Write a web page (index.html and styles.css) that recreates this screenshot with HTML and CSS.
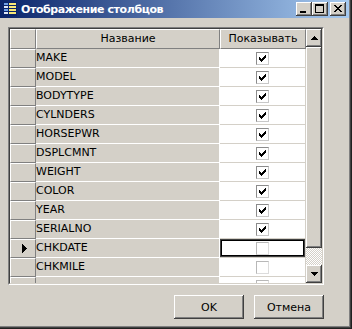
FILE: index.html
```html
<!DOCTYPE html>
<html lang="ru">
<head>
<meta charset="utf-8">
<title>Отображение столбцов</title>
<link rel="stylesheet" href="styles.css">
</head>
<body>
<div class="window">
  <div class="titlebar">
    <svg class="app-icon" width="16" height="16" viewBox="0 0 16 16" shape-rendering="crispEdges">
      <rect x="1" y="1" width="14" height="14" fill="#0a246a"/>
      <rect x="2" y="2" width="4" height="2" fill="#6fa0e8"/>
      <rect x="2" y="5" width="4" height="2" fill="#dfe8f8"/>
      <rect x="2" y="8" width="4" height="2" fill="#6fa0e8"/>
      <rect x="2" y="11" width="4" height="2" fill="#dfe8f8"/>
      <rect x="7" y="2" width="7" height="2" fill="#f8e878"/>
      <rect x="7" y="5" width="7" height="2" fill="#f8e878"/>
      <rect x="7" y="8" width="7" height="2" fill="#f8e878"/>
      <rect x="7" y="11" width="7" height="2" fill="#f8e878"/>
    </svg>
    <span class="title">Отображение столбцов</span>
    <div class="ctrls">
      <div class="cbtn"><svg width="16" height="14" viewBox="0 0 16 14" shape-rendering="crispEdges"><path d="M4 9h6v2h-6z" fill="#000"/></svg></div>
      <div class="cbtn"><svg width="16" height="14" viewBox="0 0 16 14" shape-rendering="crispEdges"><path d="M3 2h9v2h-9z M3 4h1v6h-1z M11 4h1v6h-1z M3 10h9v1h-9z" fill="#000"/></svg></div>
      <div class="cbtn close"><svg width="16" height="14" viewBox="0 0 16 14" shape-rendering="crispEdges"><path d="M4 3h2v1h-2z M10 3h2v1h-2z M5 4h2v1h-2z M9 4h2v1h-2z M6 5h4v1h-4z M7 6h2v1h-2z M6 7h4v1h-4z M5 8h2v1h-2z M9 8h2v1h-2z M4 9h2v1h-2z M10 9h2v1h-2z" fill="#000"/></svg></div>
    </div>
  </div>

  <div class="client">
    <div class="grid">
      <div class="grid-in">
        <div class="table">
          <div class="row head">
            <div class="ind"></div>
            <div class="name">Название</div>
            <div class="show">Показывать</div>
          </div>

          <div class="row"><div class="ind"></div><div class="name">MAKE</div><div class="show"><span class="chk"><svg width="13" height="13" viewBox="0 0 13 13" shape-rendering="crispEdges"><path d="M9 3h1v1h-1z M8 4h2v1h-2z M3 5h1v1h-1z M7 5h3v1h-3z M3 6h2v1h-2z M6 6h3v1h-3z M3 7h5v1h-5z M4 8h3v1h-3z M5 9h1v1h-1z" fill="#000"/></svg></span></div></div>
          <div class="row"><div class="ind"></div><div class="name">MODEL</div><div class="show"><span class="chk"><svg width="13" height="13" viewBox="0 0 13 13" shape-rendering="crispEdges"><path d="M9 3h1v1h-1z M8 4h2v1h-2z M3 5h1v1h-1z M7 5h3v1h-3z M3 6h2v1h-2z M6 6h3v1h-3z M3 7h5v1h-5z M4 8h3v1h-3z M5 9h1v1h-1z" fill="#000"/></svg></span></div></div>
          <div class="row"><div class="ind"></div><div class="name">BODYTYPE</div><div class="show"><span class="chk"><svg width="13" height="13" viewBox="0 0 13 13" shape-rendering="crispEdges"><path d="M9 3h1v1h-1z M8 4h2v1h-2z M3 5h1v1h-1z M7 5h3v1h-3z M3 6h2v1h-2z M6 6h3v1h-3z M3 7h5v1h-5z M4 8h3v1h-3z M5 9h1v1h-1z" fill="#000"/></svg></span></div></div>
          <div class="row"><div class="ind"></div><div class="name">CYLNDERS</div><div class="show"><span class="chk"><svg width="13" height="13" viewBox="0 0 13 13" shape-rendering="crispEdges"><path d="M9 3h1v1h-1z M8 4h2v1h-2z M3 5h1v1h-1z M7 5h3v1h-3z M3 6h2v1h-2z M6 6h3v1h-3z M3 7h5v1h-5z M4 8h3v1h-3z M5 9h1v1h-1z" fill="#000"/></svg></span></div></div>
          <div class="row"><div class="ind"></div><div class="name">HORSEPWR</div><div class="show"><span class="chk"><svg width="13" height="13" viewBox="0 0 13 13" shape-rendering="crispEdges"><path d="M9 3h1v1h-1z M8 4h2v1h-2z M3 5h1v1h-1z M7 5h3v1h-3z M3 6h2v1h-2z M6 6h3v1h-3z M3 7h5v1h-5z M4 8h3v1h-3z M5 9h1v1h-1z" fill="#000"/></svg></span></div></div>
          <div class="row"><div class="ind"></div><div class="name">DSPLCMNT</div><div class="show"><span class="chk"><svg width="13" height="13" viewBox="0 0 13 13" shape-rendering="crispEdges"><path d="M9 3h1v1h-1z M8 4h2v1h-2z M3 5h1v1h-1z M7 5h3v1h-3z M3 6h2v1h-2z M6 6h3v1h-3z M3 7h5v1h-5z M4 8h3v1h-3z M5 9h1v1h-1z" fill="#000"/></svg></span></div></div>
          <div class="row"><div class="ind"></div><div class="name">WEIGHT</div><div class="show"><span class="chk"><svg width="13" height="13" viewBox="0 0 13 13" shape-rendering="crispEdges"><path d="M9 3h1v1h-1z M8 4h2v1h-2z M3 5h1v1h-1z M7 5h3v1h-3z M3 6h2v1h-2z M6 6h3v1h-3z M3 7h5v1h-5z M4 8h3v1h-3z M5 9h1v1h-1z" fill="#000"/></svg></span></div></div>
          <div class="row"><div class="ind"></div><div class="name">COLOR</div><div class="show"><span class="chk"><svg width="13" height="13" viewBox="0 0 13 13" shape-rendering="crispEdges"><path d="M9 3h1v1h-1z M8 4h2v1h-2z M3 5h1v1h-1z M7 5h3v1h-3z M3 6h2v1h-2z M6 6h3v1h-3z M3 7h5v1h-5z M4 8h3v1h-3z M5 9h1v1h-1z" fill="#000"/></svg></span></div></div>
          <div class="row"><div class="ind"></div><div class="name">YEAR</div><div class="show"><span class="chk"><svg width="13" height="13" viewBox="0 0 13 13" shape-rendering="crispEdges"><path d="M9 3h1v1h-1z M8 4h2v1h-2z M3 5h1v1h-1z M7 5h3v1h-3z M3 6h2v1h-2z M6 6h3v1h-3z M3 7h5v1h-5z M4 8h3v1h-3z M5 9h1v1h-1z" fill="#000"/></svg></span></div></div>
          <div class="row"><div class="ind"></div><div class="name">SERIALNO</div><div class="show"><span class="chk"><svg width="13" height="13" viewBox="0 0 13 13" shape-rendering="crispEdges"><path d="M9 3h1v1h-1z M8 4h2v1h-2z M3 5h1v1h-1z M7 5h3v1h-3z M3 6h2v1h-2z M6 6h3v1h-3z M3 7h5v1h-5z M4 8h3v1h-3z M5 9h1v1h-1z" fill="#000"/></svg></span></div></div>
          <div class="row"><div class="ind"><svg class="cur" width="5" height="9" viewBox="0 0 5 9" shape-rendering="crispEdges"><path d="M0 0h1v9h-1z M1 1h1v7h-1z M2 2h1v5h-1z M3 3h1v3h-1z M4 4h1v1h-1z" fill="#000"/></svg></div><div class="name">CHKDATE</div><div class="show current"><span class="chk off"></span></div></div>
          <div class="row"><div class="ind"></div><div class="name">CHKMILE</div><div class="show"><span class="chk off"></span></div></div>
          <div class="row"><div class="ind"></div><div class="name"></div><div class="show"><span class="chk off"></span></div></div>
        </div>

        <div class="vscroll">
          <div class="sb-btn"><svg width="7" height="4" viewBox="0 0 7 4" shape-rendering="crispEdges"><path d="M3 0h1v1h-1z M2 1h3v1h-3z M1 2h5v1h-5z M0 3h7v1h-7z" fill="#000"/></svg></div>
          <div class="thumb"></div>
          <div class="track"></div>
          <div class="sb-btn"><svg width="7" height="4" viewBox="0 0 7 4" shape-rendering="crispEdges"><path d="M0 0h7v1h-7z M1 1h5v1h-5z M2 2h3v1h-3z M3 3h1v1h-1z" fill="#000"/></svg></div>
        </div>
      </div>
    </div>

    <div class="buttons">
      <div class="btn">OK</div>
      <div class="btn">Отмена</div>
    </div>
  </div>
</div>
</body>
</html>
```

FILE: styles.css
```css
* { box-sizing: border-box; margin: 0; padding: 0; }

html, body { width: 352px; height: 329px; overflow: hidden; }

body {
  background: #d4d0c8;
  font-family: "DejaVu Sans", Tahoma, sans-serif;
  font-size: 11px;
  color: #000;
}

.window {
  width: 352px;
  height: 329px;
  display: flex;
  flex-direction: column;
  padding: 0 3px 3px 0;
  box-shadow: inset -1px -1px #202020, inset -2px -2px #404040, inset -3px -3px #808080;
}

/* title bar */
.titlebar {
  height: 18px;
  flex: none;
  display: flex;
  align-items: center;
  background: linear-gradient(to right, #0a246a, #a6caf0);
  padding-right: 3px;
}

.app-icon { margin-left: 2px; flex: none; }

.title {
  margin-left: 3px;
  color: #fff;
  font-weight: bold;
  font-size: 11px;
  letter-spacing: -0.4px;
  white-space: nowrap;
}

.ctrls {
  margin-left: auto;
  display: flex;
  align-items: center;
}

.cbtn {
  width: 16px;
  height: 14px;
  background: #d4d0c8;
  box-shadow: inset -1px -1px #404040, inset 1px 1px #fff, inset -2px -2px #808080;
}

.cbtn svg { display: block; }

.cbtn.close { margin-left: 2px; }

/* client */
.client {
  flex: 1;
  display: flex;
  flex-direction: column;
  padding: 9px 25px 0 8px;
}

.grid {
  width: 316px;
  height: 258px;
  border: 1px solid;
  border-color: #808080 #fff #fff #808080;
}

.grid-in {
  height: 100%;
  display: flex;
  border: 1px solid;
  border-color: #404040 #d4d0c8 #d4d0c8 #404040;
  overflow: hidden;
}

.table {
  width: 296px;
  flex: none;
  display: flex;
  flex-direction: column;
  overflow: hidden;
}

.row {
  display: flex;
  height: 19px;
  flex: none;
}

.row.head { height: 20px; }

.ind {
  width: 26px;
  flex: none;
  background: #d4d0c8;
  border: 1px solid;
  border-color: #fff #808080 #808080 #fff;
  display: flex;
  align-items: center;
  justify-content: center;
}

.cur { display: block; margin-left: 2px; }

.name {
  width: 184px;
  flex: none;
  background: #d4d0c8;
  border-bottom: 1px solid #fff;
  border-right: 1px solid #fff;
  line-height: 18px;
  white-space: nowrap;
  overflow: hidden;
}

.show {
  width: 86px;
  flex: none;
  background: #fff;
  border-bottom: 1px solid #d4d0c8;
  border-right: 1px solid #d4d0c8;
  display: flex;
  align-items: center;
  justify-content: center;
}

.show.current {
  box-shadow: inset 0 0 0 1px #404040, inset 0 0 0 2px #000;
}

.head .name,
.head .show {
  background: #d4d0c8;
  border: 1px solid;
  border-color: #fff #808080 #808080 #fff;
  text-align: center;
  line-height: 18px;
}

.chk {
  width: 13px;
  height: 13px;
  display: block;
  border: 1px solid;
  border-color: #8c8c8c #c8c8c8 #c8c8c8 #8c8c8c;
  background: #fff;
  position: relative;
}

.chk svg { display: block; margin: -1px 0 0 -1px; }

.chk.off { border-color: #b8b8b8 #dcdcdc #dcdcdc #b8b8b8; }

/* scrollbar */
.vscroll {
  width: 16px;
  flex: none;
  display: flex;
  flex-direction: column;
}

.sb-btn,
.thumb {
  background: #d4d0c8;
  box-shadow: inset -1px -1px #404040, inset 1px 1px #fff, inset -2px -2px #808080;
}

.sb-btn {
  height: 18px;
  flex: none;
  display: flex;
  align-items: center;
  justify-content: center;
}

.sb-btn svg { display: block; }

.thumb { height: 201px; flex: none; }

.track {
  flex: 1;
  background: repeating-conic-gradient(#d4d0c8 0 25%, #fff 0 50%) 0 0 / 2px 2px;
}

/* buttons */
.buttons {
  display: flex;
  justify-content: flex-end;
  gap: 10px;
  margin-top: 10px;
}

.btn {
  width: 70px;
  height: 24px;
  display: flex;
  align-items: center;
  justify-content: center;
  background: #d4d0c8;
  box-shadow: inset -1px -1px #404040, inset 1px 1px #fff, inset -2px -2px #808080;
}
```
